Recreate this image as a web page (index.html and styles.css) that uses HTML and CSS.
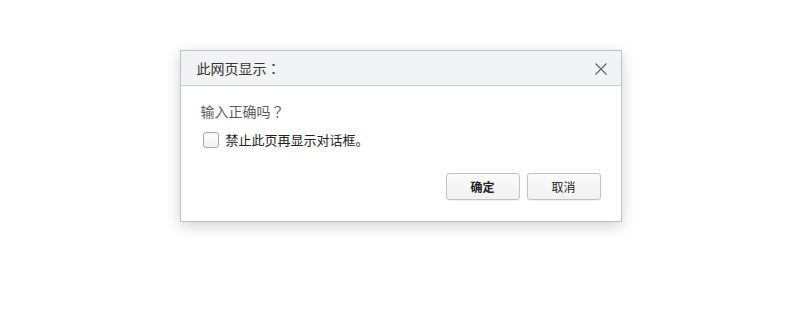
FILE: index.html
```html
<!DOCTYPE html>
<html lang="zh-CN">
<head>
<meta charset="utf-8">
<title>对话框</title>
<link rel="stylesheet" href="styles.css">
</head>
<body>
<div class="page">
  <div class="dialog">
    <div class="dialog-header">
      <span class="dialog-title">此网页显示<span class="punct" lang="ja">：</span></span>
      <button class="close-btn" aria-label="关闭">
        <svg width="12" height="12" viewBox="0 0 12 12"><path d="M0.5 0.5L11.5 11.5M11.5 0.5L0.5 11.5" stroke="#666" stroke-width="1.2" fill="none"/></svg>
      </button>
    </div>
    <div class="dialog-body">
      <div class="message">输入正确吗<span class="punct" lang="ja">？</span></div>
      <label class="suppress">
        <span class="checkbox"></span>
        <span class="suppress-text">禁止此页再显示对话框。</span>
      </label>
      <div class="actions">
        <button class="btn btn-primary">确定</button>
        <button class="btn">取消</button>
      </div>
    </div>
  </div>
</div>
</body>
</html>
```
FILE: styles.css
```css
html, body {
  margin: 0;
  padding: 0;
  background: #ffffff;
}
body {
  font-family: "Noto Sans CJK SC", "Noto Sans", "Liberation Sans", sans-serif;
  width: 800px;
  height: 320px;
  overflow: hidden;
}
.page {
  display: flex;
  justify-content: center;
  padding-top: 50px;
}
.dialog {
  width: 440px;
  border: 1px solid #c3c3c3;
  background: #fff;
  box-shadow: 0 4px 14px rgba(0, 0, 0, 0.18);
  margin-left: 1px;
}
.dialog-header {
  height: 34px;
  background: #f2f3f4;
  border-bottom: 1px solid #d0d0d0;
  display: flex;
  align-items: center;
  justify-content: space-between;
  padding: 0 14px 0 16px;
}
.dialog-title {
  font-size: 14px;
  color: #333;
}
.punct {
  font-family: "Noto Sans CJK JP", "Noto Sans CJK SC", sans-serif;
}
.close-btn {
  border: 0;
  background: transparent;
  padding: 0;
  width: 12px;
  height: 12px;
  display: flex;
  margin-top: 1px;
}
.dialog-body {
  padding: 15px 20px 21px 20px;
}
.message {
  font-size: 14px;
  line-height: 20px;
  color: #5b5b66;
}
.suppress {
  display: flex;
  align-items: center;
  gap: 7px;
  margin-top: 11px;
  padding-left: 2px;
}
.checkbox {
  width: 14px;
  height: 14px;
  border: 1px solid #a8a8a8;
  border-radius: 3px;
  background: linear-gradient(#ffffff, #f0f0f0);
  box-shadow: inset 0 1px 1px rgba(0,0,0,0.05);
}
.suppress-text {
  font-size: 13px;
  line-height: 16px;
  color: #222;
}
.actions {
  display: flex;
  justify-content: flex-end;
  gap: 7px;
  margin-top: 25px;
}
.btn {
  width: 74px;
  height: 27px;
  border: 1px solid #c2c2c2;
  border-radius: 3px;
  background: linear-gradient(#fbfbfb, #f1f1f1);
  box-shadow: 0 1px 1px rgba(0,0,0,0.06);
  font-family: "Noto Sans CJK SC", "Noto Sans", sans-serif;
  font-size: 12px;
  color: #222;
  padding: 0;
}
.btn-primary {
  font-weight: bold;
}
```
